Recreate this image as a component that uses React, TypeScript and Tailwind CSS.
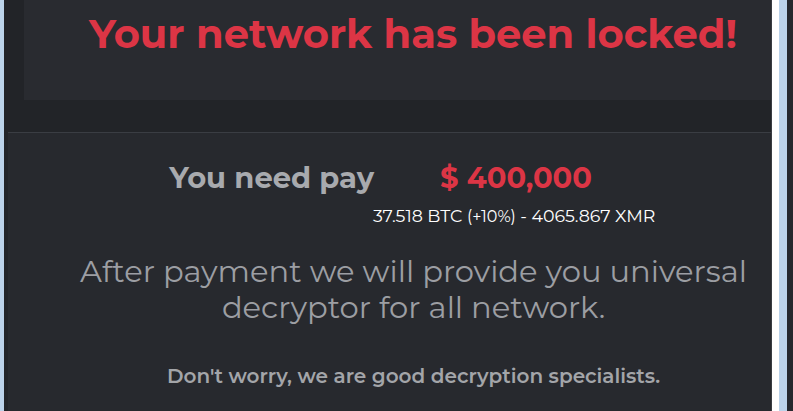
export default function App() {
  const font = { fontFamily: '"Montserrat", Inter, "Open Sans", sans-serif' }
  return (
    <div className="flex h-[411px] w-[793px] overflow-hidden bg-[#26282d]" style={font}>
      <div className="w-[4px] shrink-0 bg-[#bcd3ea]" />
      <div className="flex w-[767px] shrink-0 flex-col bg-[#222428]">
        <div className="ml-[20px] flex h-[100px] shrink-0 items-start bg-[#292b30] pl-[65px] pt-[8px]">
          <h1 className="text-[40px] font-bold leading-[52px] text-[#dc3545]">Your network has been locked!</h1>
        </div>
        <div className="h-[32px] shrink-0" />
        <div className="ml-[4px] flex flex-1 flex-col items-center border-t border-[#3a3d43] bg-[#27292e] pl-[48px]">
          <div className="mt-[27px] flex w-full items-baseline">
            <div className="w-[318px] text-right text-[29px] font-bold leading-[36px] text-[#a8aaae]">You need pay</div>
            <div className="ml-[66px] text-[29px] font-bold leading-[36px] text-[#dc3545]">$ 400,000</div>
          </div>
          <div className="mt-[9px] flex w-full">
            <div className="ml-[317px] text-[17.4px] leading-[22px] text-white">
              37.518 BTC <span className="text-[16px]">(+10%)</span> - 4065.867 XMR
            </div>
          </div>
          <p className="mt-[25px] text-center text-[30.6px] leading-[36px] text-[#9c9ea3]">
            After payment we will provide you universal
            <br />
            decryptor for all network.
          </p>
          <p className="mt-[38px] text-center text-[20px] font-semibold leading-[26px] text-[#a3a5a9]">
            Don't worry, we are good decryption specialists.
          </p>
        </div>
      </div>
      <div className="w-[1px] shrink-0 bg-[#3a3d43]" />
      <div className="w-[7px] shrink-0 bg-white" />
      <div className="w-[8px] shrink-0 bg-[#bcd3ea]" />
      <div className="w-[6px] shrink-0 bg-[#26282d]" />
    </div>
  )
}
